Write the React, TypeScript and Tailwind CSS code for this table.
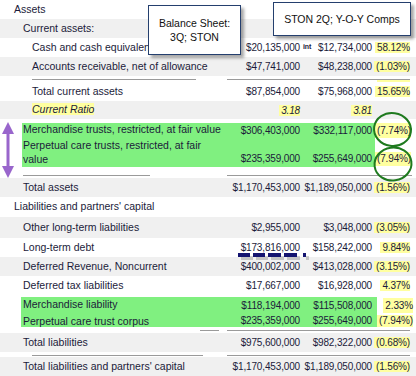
import React from "react";

const GRAY = "bg-[#f0f0f0]";
const NUM = "w-[72px] shrink-0 text-right text-[10px] tracking-[-0.15px]";

function Val({ children, hi }: { children?: React.ReactNode; hi?: boolean }) {
  if (!children) return null;
  return <span className={hi ? "bg-[#ffffa0] pl-[2px]" : ""}>{children}</span>;
}

function Row({
  label,
  pad,
  a,
  b,
  c,
  cHi = true,
  cls,
  labelCls = "",
}: {
  label: React.ReactNode;
  pad: string;
  a?: React.ReactNode;
  b?: React.ReactNode;
  c?: string;
  cHi?: boolean;
  cls: string;
  labelCls?: string;
}) {
  return (
    <div className={`flex items-center pr-[6px] ${cls}`}>
      <div className={`w-[228px] shrink-0 whitespace-nowrap text-[10.5px] ${pad} ${labelCls}`}>{label}</div>
      <div className={NUM}>{a}</div>
      <div className={NUM}>{b}</div>
      <div className="w-[38px] shrink-0 text-right text-[10px] tracking-[-0.15px]">
        <Val hi={cHi}>{c}</Val>
      </div>
    </div>
  );
}

function Sep({ cls, left, right = true }: { cls: string; left?: string; right?: boolean }) {
  return (
    <div className={`relative ${cls}`}>
      {left && <div className={`absolute h-px bg-[#9a9a9a] ${left}`} />}
      {right && <div className="absolute left-[227px] top-[3px] h-px w-[183px] bg-[#9a9a9a]" />}
    </div>
  );
}

function Callout({ children, cls }: { children: React.ReactNode; cls: string }) {
  return (
    <div
      className={`absolute flex items-center justify-center border-[1.5px] border-[#243f6e] bg-white text-center text-[10.5px] leading-[14px] text-[#111] shadow-[3px_3px_3px_rgba(0,0,0,0.35)] ${cls}`}
    >
      {children}
    </div>
  );
}

export default function App() {
  return (
    <div className="relative h-[376px] w-[416px] overflow-hidden bg-white font-['Liberation_Sans',Arial,sans-serif] text-[#1b1b3a]">
      <Row cls="h-[19px]" pad="pl-[14px]" label="Assets" />
      <Row cls={`h-[19px] ${GRAY}`} pad="pl-[23px]" label="Current assets:" />
      <div className="flex h-[19px] items-center pr-[6px]">
        <div className="w-[228px] shrink-0 pl-[32px] text-[10.5px]">Cash and cash equivalents</div>
        <div className={NUM}>$20,135,000</div>
        <div className="flex w-[72px] shrink-0 items-center justify-between text-[10px] tracking-[-0.15px]">
          <span className="ml-[3px] text-[7px] font-bold">int</span>
          <span>$12,734,000</span>
        </div>
        <div className="w-[38px] shrink-0 text-right text-[10px] tracking-[-0.15px]">
          <Val hi>58.12%</Val>
        </div>
      </div>
      <Row cls={`h-[19px] ${GRAY}`} pad="pl-[32px]" label="Accounts receivable, net of allowance" a="$47,741,000" b="$48,238,000" c="(1.03%)" />
      <div className="relative h-[6px]">
        <div className="absolute left-[32px] top-[3px] h-px w-[164px] bg-[#9a9a9a]" />
        <div className="absolute left-[227px] top-[3px] h-px w-[183px] bg-[#9a9a9a]" />
        <div className="absolute left-[377px] top-[4px] h-[2px] w-[33px] bg-[#ffffa0]" />
      </div>
      <Row cls="h-[19px]" pad="pl-[32px]" label="Total current assets" a="$87,854,000" b="$75,968,000" c="15.65%" />
      <Row
        cls={`h-[18px] ${GRAY}`}
        pad="pl-[32px]"
        label={<span className="bg-[#ffffa0] italic">Current Ratio</span>}
        a={<span className="bg-[#ffffa0] pl-[2px] italic">3.18</span>}
        b={<span className="bg-[#ffffa0] pl-[2px] italic">3.81</span>}
      />
      <div className="h-[4px]" />

      {/* green block, assets */}
      <div className="flex pr-[6px]">
        <div className="ml-[22px] w-[353px] shrink-0 bg-[#80f080]">
          <div className="flex h-[14px] items-center">
            <div className="w-[206px] shrink-0 whitespace-nowrap pl-[1px] text-[10.5px]">Merchandise trusts, restricted, at fair value</div>
            <div className={NUM}>$306,403,000</div>
            <div className={NUM}>$332,117,000</div>
          </div>
          <div className="flex h-[30px] items-end pb-[1px] leading-[14px]">
            <div className="w-[206px] shrink-0 pl-[1px] text-[10.5px]">
              Perpetual care trusts, restricted, at fair
              <br />
              value
            </div>
            <div className={NUM}>$235,359,000</div>
            <div className={NUM}>$255,649,000</div>
          </div>
        </div>
        <div className="flex flex-1 flex-col text-right text-[10px] tracking-[-0.15px]">
          <div className="flex h-[14px] items-center justify-end">
            <Val hi>(7.74%)</Val>
          </div>
          <div className="flex h-[30px] items-end justify-end pb-[1px] leading-[14px]">
            <Val hi>(7.94%)</Val>
          </div>
        </div>
      </div>
      <div className="relative h-[11px]">
        <div className="absolute left-[23px] top-[8px] h-px w-[127px] bg-[#9a9a9a]" />
        <div className="absolute left-[227px] top-[8px] h-px w-[185px] bg-[#9a9a9a]" />
      </div>
      <Row cls={`h-[19px] ${GRAY}`} pad="pl-[23px]" label="Total assets" a="$1,170,453,000" b="$1,189,050,000" c="(1.56%)" />
      <Row cls="h-[20px]" pad="pl-[14px]" label="Liabilities and partners' capital" />
      <Row cls={`h-[21px] ${GRAY}`} pad="pl-[23px]" label="Other long-term liabilities" a="$2,955,000" b="$3,048,000" c="(3.05%)" />
      <Row cls="h-[19px]" pad="pl-[23px]" label="Long-term debt" a="$173,816,000" b="$158,242,000" c="9.84%" />
      <Row cls={`h-[19px] ${GRAY}`} pad="pl-[23px]" label="Deferred Revenue, Noncurrent" a="$400,002,000" b="$413,028,000" c="(3.15%)" />
      <Row cls="h-[19px]" pad="pl-[23px]" label="Deferred tax liabilities" a="$17,667,000" b="$16,928,000" c="4.37%" />
      <div className="h-[2px]" />

      {/* green block, liabilities */}
      <div className="flex pr-[6px]">
        <div className="ml-[21px] w-[356px] shrink-0 bg-[#80f080]">
          <div className="flex h-[16px] items-center">
            <div className="w-[207px] shrink-0 pl-[2px] text-[10.5px]">Merchandise liability</div>
            <div className={NUM}>$118,194,000</div>
            <div className={NUM}>$115,508,000</div>
          </div>
          <div className="flex h-[14px] items-end leading-[12px]">
            <div className="w-[207px] shrink-0 pl-[2px] text-[10.5px]">Perpetual care trust corpus</div>
            <div className={NUM}>$235,359,000</div>
            <div className={NUM}>$255,649,000</div>
          </div>
        </div>
        <div className="flex flex-1 flex-col text-right text-[10px] tracking-[-0.15px]">
          <div className="flex h-[16px] items-center justify-end">
            <Val hi>2.33%</Val>
          </div>
          <div className="flex h-[14px] items-end justify-end leading-[12px]">
            <Val hi>(7.94%)</Val>
          </div>
        </div>
      </div>
      <Sep cls="h-[6px]" left="left-[200px] top-[3px] w-[19px]" />
      <Row cls={`h-[19px] ${GRAY}`} pad="pl-[23px]" label="Total liabilities" a="$975,600,000" b="$982,322,000" c="(0.68%)" />
      <Sep cls="h-[5px]" left="left-[32px] top-[3px] w-[171px]" />
      <Row cls={`h-[19px] ${GRAY}`} pad="pl-[23px]" label="Total liabilities and partners' capital" a="$1,170,453,000" b="$1,189,050,000" c="(1.56%)" />

      {/* overlays */}
      <Callout cls="left-[148px] top-[5px] h-[50px] w-[93px]">
        <span>
          Balance Sheet:
          <br />
          3Q; STON
        </span>
      </Callout>
      <Callout cls="left-[273px] top-[2px] h-[34px] w-[138px]">STON 2Q; Y-O-Y Comps</Callout>

      <svg className="absolute left-0 top-0" width="416" height="376" viewBox="0 0 416 376" fill="none">
        {/* purple double arrow */}
        <polygon points="8,122 14,134 2,134" fill="#9966cc" />
        <rect x="6.5" y="133" width="3" height="34" fill="#9966cc" />
        <polygon points="2,166 14,166 8,178" fill="#9966cc" />
        {/* green ellipses */}
        <ellipse cx="392.5" cy="129.5" rx="18.5" ry="16.5" stroke="#1f7a1f" strokeWidth="2" transform="rotate(8 392.5 129.5)" />
        <ellipse cx="393" cy="164" rx="18.5" ry="16.5" stroke="#1f7a1f" strokeWidth="2" transform="rotate(-8 393 164)" />
        {/* dashed underline */}
        <line x1="241" y1="258" x2="309" y2="258" stroke="rgba(0,0,0,0.18)" strokeWidth="4" strokeDasharray="12 3 12 3 13 3 13 6 4 0" />
        <line x1="238" y1="255" x2="306" y2="255" stroke="#141470" strokeWidth="4" strokeDasharray="12 3 12 3 13 3 13 6 4 0" />
      </svg>
    </div>
  );
}
